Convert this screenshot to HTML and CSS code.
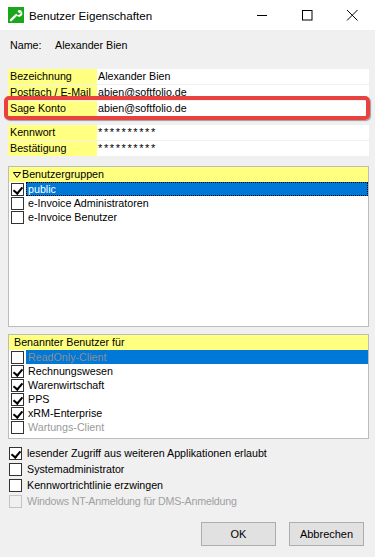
FILE: index.html
```html
<!DOCTYPE html>
<html lang="de">
<head>
<meta charset="utf-8">
<title>Benutzer Eigenschaften</title>
<link rel="stylesheet" href="styles.css">
</head>
<body>
<div class="window">
  <div class="titlebar">
    <div class="app-icon">
      <svg width="16" height="16" viewBox="0 0 16 16"><rect width="16" height="16" fill="#1aa81a"/><path d="M3 13.2 L8.2 8" stroke="#fff" stroke-width="2.4" stroke-linecap="round"/><path d="M8.2 8 A3.3 3.3 0 1 0 10.6 3.1 L9.6 4.6 L11.3 6.3 L12.8 5.3 A3.3 3.3 0 0 1 8.2 8 Z" fill="#fff"/></svg>
    </div>
    <div class="title">Benutzer Eigenschaften</div>
    <div class="win-controls">
      <span class="ctl"><svg width="12" height="12" viewBox="0 0 12 12"><path d="M1 6.5 H11" stroke="#000" stroke-width="1"/></svg></span>
      <span class="ctl"><svg width="12" height="12" viewBox="0 0 12 12"><rect x="1.5" y="1.5" width="9.5" height="9.5" fill="none" stroke="#000" stroke-width="1"/></svg></span>
      <span class="ctl"><svg width="12" height="12" viewBox="0 0 12 12"><path d="M1 1 L11.5 11.5 M11.5 1 L1 11.5" stroke="#000" stroke-width="1"/></svg></span>
    </div>
  </div>

  <div class="content">
    <div class="name-row"><span class="name-label">Name:</span><span>Alexander Bien</span></div>

    <div class="fields">
      <div class="field"><div class="flabel">Bezeichnung</div><div class="fvalue">Alexander Bien</div></div>
      <div class="field"><div class="flabel">Postfach / E-Mail</div><div class="fvalue">abien@softfolio.de</div></div>
      <div class="field highlight"><div class="flabel">Sage Konto</div><div class="fvalue">abien@softfolio.de</div></div>
    </div>

    <div class="fields second">
      <div class="field"><div class="flabel">Kennwort</div><div class="fvalue pw">**********</div></div>
      <div class="field"><div class="flabel">Bestätigung</div><div class="fvalue pw">**********</div></div>
    </div>

    <div class="group group-users">
      <div class="ghead"><svg class="tri" width="8" height="6" viewBox="0 0 8 6"><path d="M0.5 0.5 H7.5 L4 5.5 Z" fill="none" stroke="#000" stroke-width="1"/></svg>Benutzergruppen</div>
      <div class="row"><span class="cb checked"></span><span class="rlabel selected focus">public</span></div>
      <div class="row"><span class="cb"></span><span class="rlabel">e-Invoice Administratoren</span></div>
      <div class="row"><span class="cb"></span><span class="rlabel">e-Invoice Benutzer</span></div>
    </div>

    <div class="group group-named">
      <div class="ghead plain">Benannter Benutzer für</div>
      <div class="row"><span class="cb"></span><span class="rlabel selected dim">ReadOnly-Client</span></div>
      <div class="row"><span class="cb checked"></span><span class="rlabel">Rechnungswesen</span></div>
      <div class="row"><span class="cb checked"></span><span class="rlabel">Warenwirtschaft</span></div>
      <div class="row"><span class="cb checked"></span><span class="rlabel">PPS</span></div>
      <div class="row"><span class="cb checked"></span><span class="rlabel">xRM-Enterprise</span></div>
      <div class="row"><span class="cb"></span><span class="rlabel grey">Wartungs-Client</span></div>
    </div>

    <div class="options">
      <div class="opt"><span class="cb checked"></span><span>lesender Zugriff aus weiteren Applikationen erlaubt</span></div>
      <div class="opt"><span class="cb"></span><span>Systemadministrator</span></div>
      <div class="opt"><span class="cb"></span><span>Kennwortrichtlinie erzwingen</span></div>
      <div class="opt disabled"><span class="cb"></span><span class="narrow">Windows NT-Anmeldung für DMS-Anmeldung</span></div>
    </div>

    <div class="buttons">
      <button class="btn">OK</button>
      <button class="btn">Abbrechen</button>
    </div>
  </div>
</div>
</body>
</html>
```
FILE: styles.css
```css
* { box-sizing: border-box; }
html, body {
  margin: 0;
  padding: 0;
}
body {
  width: 375px;
  height: 557px;
  overflow: hidden;
  background: #f0f0f0;
  font-family: "Liberation Sans", Arial, sans-serif;
  font-size: 10.7px;
  color: #000;
}
.titlebar {
  height: 30px;
  background: #fff;
  display: flex;
  align-items: center;
  padding-left: 8px;
}
.app-icon { width: 16px; height: 16px; margin-top: -1px; }
.app-icon svg { display: block; }
.title {
  font-size: 11.6px;
  margin-left: 5px;
  flex: 1;
}
.win-controls { display: flex; height: 30px; padding-right: 1px; }
.ctl {
  width: 45px;
  display: flex;
  align-items: center;
  justify-content: center;
  margin-top: -1px;
}
.ctl svg { display: block; }

.content {
  padding: 0 6px 0 8px;
}
.name-row {
  height: 30px;
  line-height: 30px;
  padding-left: 2px;
  display: flex;
}
.name-label { width: 45px; }

.fields {
  margin-top: 9px;
  display: flex;
  flex-direction: column;
  gap: 1px;
}
.fields.second { margin-top: 9px; }
.field {
  display: flex;
  height: 15px;
  line-height: 15px;
  position: relative;
}
.flabel {
  width: 89px;
  background: #ffff80;
  padding-left: 2px;
  white-space: nowrap;
  overflow: hidden;
}
.fvalue {
  flex: 1;
  background: #fff;
  padding-left: 1px;
}
.fvalue.pw { line-height: 14px; letter-spacing: 1.6px; font-size: 11px; }
.field.highlight::after {
  content: "";
  position: absolute;
  top: -5px;
  bottom: -4px;
  left: -4px;
  right: -1px;
  border: 4px solid #e9413f;
  border-radius: 5px;
  box-shadow: 1px 1px 1px rgba(0,0,0,0.35);
}

.group {
  background: #fff;
  border: 1px solid #bcbcbc;
}
.group-users { margin-top: 10px; height: 161px; }
.group-named { margin-top: 7px; height: 105px; }
.ghead {
  height: 15px;
  line-height: 15px;
  background: #ffff80;
  padding-left: 4px;
  display: flex;
  align-items: center;
}
.ghead.plain { padding-left: 5px; }
.tri { margin-right: 1px; margin-top: 1px; }
.row {
  height: 14px;
  display: flex;
  align-items: center;
  padding-left: 2px;
}
.cb {
  width: 13px;
  height: 13px;
  border: 1px solid #333;
  background: #fff;
  flex: none;
  position: relative;
}
.cb.checked::after {
  content: "";
  position: absolute;
  left: 3px;
  top: 1px;
  width: 4px;
  height: 7px;
  border-right: 2px solid #000;
  border-bottom: 2px solid #000;
  transform: rotate(40deg);
}
.rlabel {
  height: 14px;
  line-height: 14px;
  margin-left: 2px;
  padding-left: 2px;
  flex: 1;
}
.rlabel.selected { background: #0078d7; color: #fff; }
.rlabel.focus { outline: 1px dotted #000; outline-offset: -1px; }
.rlabel.dim { color: #8e8e8e; }
.rlabel.grey { color: #9a9a9a; }

.options { margin-top: 6px; }
.opt {
  height: 16px;
  display: flex;
  align-items: center;
  padding-left: 1px;
  gap: 5px;
}
.opt .cb { width: 13px; height: 13px; }
.opt.disabled { color: #a0a0a0; }
.opt.disabled .cb { border-color: #c4c4c4; background: #f0f0f0; }
.narrow { letter-spacing: -0.2px; }

.buttons {
  margin-top: 13px;
  display: flex;
  justify-content: flex-end;
  gap: 13px;
  padding-right: 5px;
}
.btn {
  width: 75px;
  height: 24px;
  background: #e1e1e1;
  border: 1px solid #adadad;
  font-family: "Liberation Sans", Arial, sans-serif;
  font-size: 11px;
  color: #000;
  padding: 0;
}
```
